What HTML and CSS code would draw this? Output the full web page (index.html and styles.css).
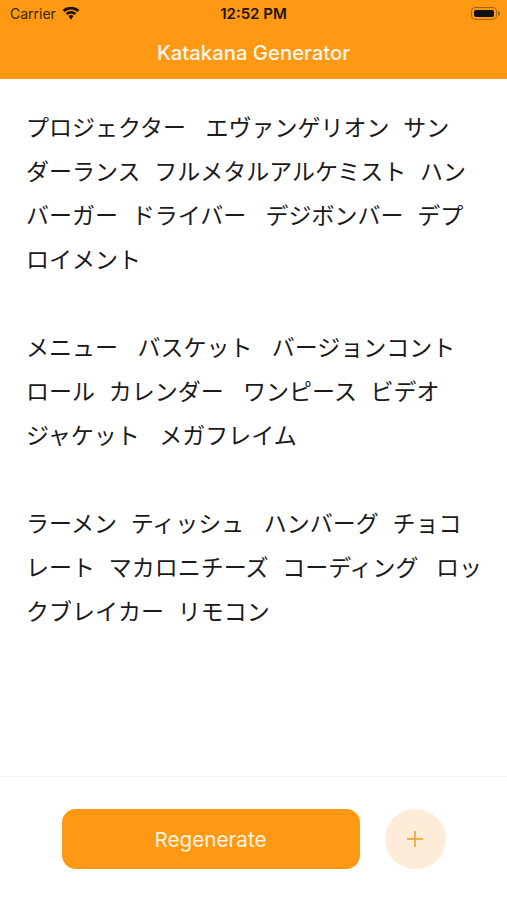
FILE: index.html
```html
<!DOCTYPE html>
<html lang="ja">
<head>
    <title>Katakana Generator</title>
    <link rel="stylesheet" href="styles.css">
</head>
<body>
    <div class="app">
        <div class="header">
            <div class="status-bar">
                <div class="status-left">
                    <span class="carrier">Carrier</span>
                    <svg class="wifi" viewBox="0 0 18 13" width="18" height="13">
                        <path d="M9 2.600c2.500 0 4.700 1 6.400 2.500L17.500 3C15.200.9 12.300-.2 9-.2S2.800.9.500 3l2.100 2.100C4.300 3.600 6.500 2.600 9 2.600z"/>
                        <path d="M9 6.700c1.300 0 2.500.5 3.400 1.300l2-2.100C12.900 4.600 11 3.900 9 3.900S5.100 4.600 3.600 5.900l2 2.100c.9-.8 2.100-1.300 3.400-1.300z"/>
                        <path d="M9 7.900c-1 0-1.800.4-2.500 1L9 12.800l2.500-3.900c-.7-.6-1.500-1-2.500-1z"/>
                    </svg>
                </div>
                <span class="clock">12:52 PM</span>
                <div class="battery"><div class="battery-level"></div></div>
            </div>
            <h1 class="nav-title">Katakana Generator</h1>
        </div>

        <div class="content">
            <p class="words">プロジェクター&#8197; エヴァンゲリオン サンダーランス フルメタルアルケミスト ハンバーガー ドライバー&#8197; デジボンバー デプロイメント</p>
            <p class="words">メニュー&#8197; バスケット&#8197; バージョンコントロール カレンダー&#8197; ワンピース ビデオ ジャケット&#8197; メガフレイム</p>
            <p class="words">ラーメン ティッシュ&#8197; ハンバーグ チョコレート マカロニチーズ コーディング&#8198; ロックブレイカー リモコン</p>
        </div>

        <div class="footer">
            <button class="regenerate">Regenerate</button>
            <button class="add">
                <svg viewBox="0 0 18 18" width="18" height="18">
                    <path d="M9 1v16M1 9h16" stroke="#f7981f" stroke-width="1.500" fill="none"/>
                </svg>
            </button>
        </div>
    </div>
</body>
</html>
```

FILE: styles.css
```css
body {
    margin: 0;
    background: white;
    font-family: Inter, "Noto Sans CJK JP", sans-serif;
}
.app {
    display: flex;
    flex-direction: column;
    height: 900px;
}
.header {
    background: #ff9913;
    height: 79px;
}
.status-bar {
    display: flex;
    justify-content: space-between;
    align-items: center;
    height: 27px;
    padding: 0 7px 0 10px;
    color: #3a2406;
    position: relative;
}
.status-left {
    display: flex;
    align-items: center;
    gap: 6px;
}
.carrier {
    font-size: 14px;
}
.wifi {
    fill: #1c1205;
}
.clock {
    position: absolute;
    left: 0;
    right: 0;
    text-align: center;
    font-size: 15px;
    font-weight: 600;
    color: #1c1205;
}
.battery {
    width: 26px;
    height: 13px;
    border: 1px solid #a8650f;
    border-radius: 4px;
    padding: 2px;
    box-sizing: border-box;
    margin-right: 3px;
    position: relative;
}
.battery::after {
    content: "";
    position: absolute;
    right: -4px;
    top: 3px;
    width: 2px;
    height: 5px;
    background: #a8650f;
    border-radius: 0 2px 2px 0;
}
.battery-level {
    background: #111;
    height: 100%;
    border-radius: 2px;
}
.nav-title {
    margin: 0;
    text-align: center;
    color: #fff8ee;
    font-size: 20.300px;
    font-weight: 500;
    line-height: 51px;
}
.content {
    flex: 1;
    padding: 25px 21px 0 26px;
}
.words {
    margin: 0 0 44px;
    font-family: "Noto Sans CJK JP", sans-serif;
    font-size: 23px;
    line-height: 44px;
    color: #1a1a1a;
    word-spacing: 8.500px;
    line-break: strict;
}
.footer {
    display: flex;
    justify-content: center;
    gap: 25px;
    height: 124px;
    padding-top: 32px;
    box-sizing: border-box;
    border-top: 1px solid #f8f6f0;
}
.regenerate {
    width: 298px;
    height: 60px;
    background: #ff9913;
    color: #fff3e2;
    border: none;
    border-radius: 14px;
    font-family: Inter, sans-serif;
    font-size: 20.700px;
}
.add {
    width: 61px;
    height: 60px;
    padding: 0;
    display: flex;
    align-items: center;
    justify-content: center;
    background: #fdecd8;
    border: none;
    border-radius: 50%;
}
```
